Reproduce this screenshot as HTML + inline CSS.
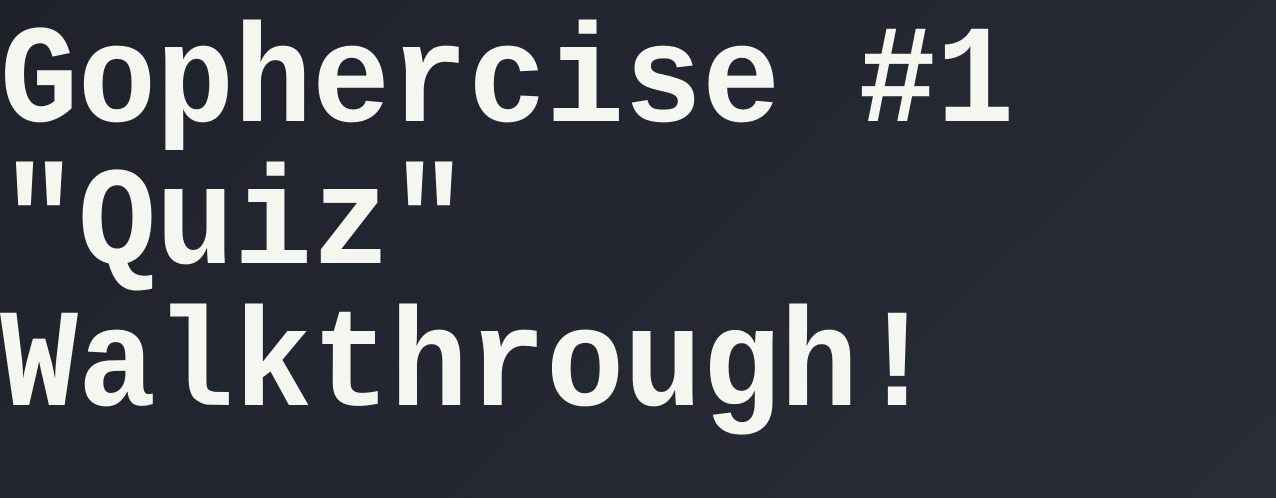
<!DOCTYPE html>
<html><head><meta charset="utf-8"><style>
html,body{margin:0;padding:0;}
body{width:1276px;height:498px;overflow:hidden;background:linear-gradient(135deg,#1f222b 0%,#252833 60%,#2a2d37 100%);}
h1{margin:0;padding-top:14px;padding-left:0;font-family:"Liberation Mono",monospace;font-weight:bold;font-size:140px;line-height:142px;color:#f5f6f0;white-space:pre;transform:scaleX(0.9286);transform-origin:0 0;}
</style></head><body>
<h1>Gophercise #1
"Quiz"
Walkthrough!</h1>
</body></html>
